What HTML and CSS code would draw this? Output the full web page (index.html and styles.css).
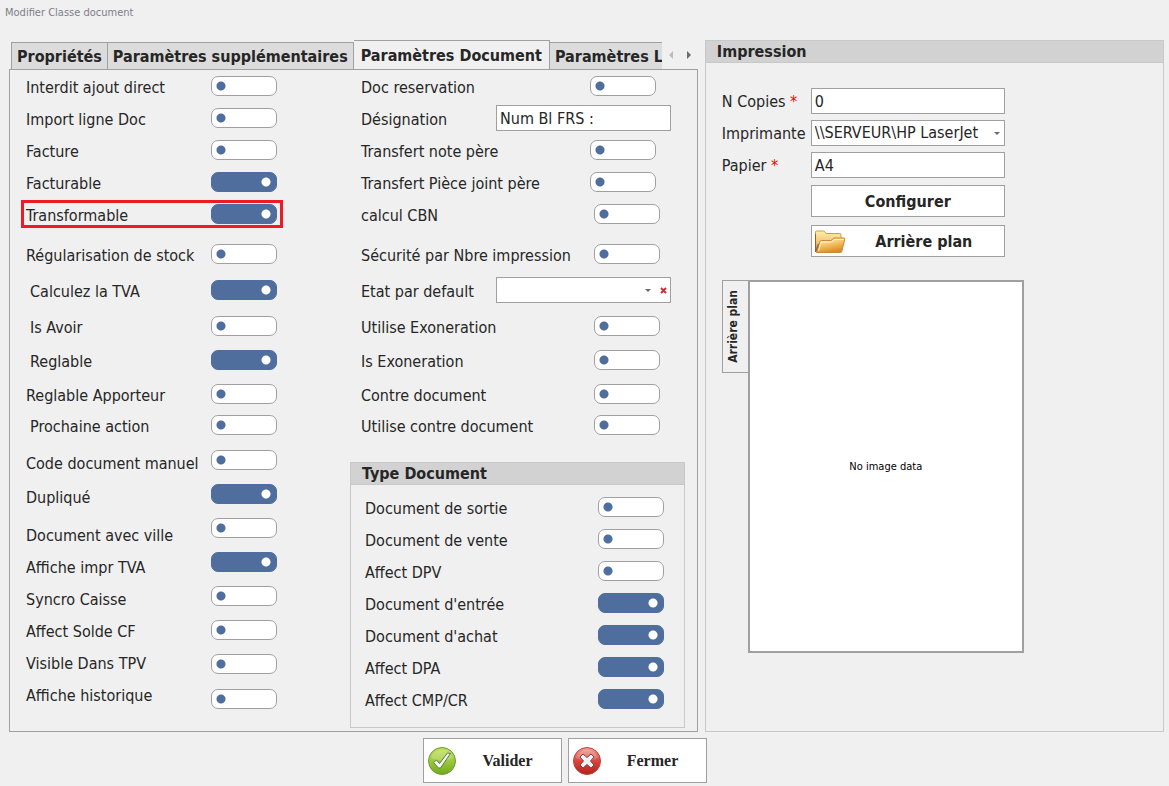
FILE: index.html
```html
<!DOCTYPE html>
<html lang="fr">
<head>
<meta charset="utf-8">
<title>Modifier Classe document</title>
<link rel="stylesheet" href="styles.css">
</head>
<body>
<h1 class="window-title">Modifier Classe document</h1>
<main class="workspace">
  <div class="editor">
    <div class="tabbar">
      <div class="tabs" role="tablist">
        <button class="tab" role="tab">Propriétés</button>
        <button class="tab" role="tab">Paramètres supplémentaires</button>
        <button class="tab tab-active" role="tab" aria-selected="true">Paramètres Document</button>
        <button class="tab tab-cut" role="tab">Paramètres L</button>
      </div>
      <button class="scroll scroll-off" aria-label="Onglet précédent"><svg width="4" height="8" viewBox="0 0 4 8"><path d="M4 0v8L0 4z"/></svg></button>
      <button class="scroll" aria-label="Onglet suivant"><svg width="4" height="8" viewBox="0 0 4 8"><path d="M0 0v8l4-4z"/></svg></button>
    </div>
    <div class="tabpanel" role="tabpanel">
      <div class="options">
        <div class="stack label-stack">
          <label for="a1">Interdit ajout direct</label>
          <label for="a2">Import ligne Doc</label>
          <label for="a3">Facture</label>
          <label for="a4">Facturable</label>
          <label for="a5">Transformable</label>
          <label for="a6">Régularisation de stock</label>
          <label for="a7" class="indent">Calculez la TVA</label>
          <label for="a8" class="indent">Is Avoir</label>
          <label for="a9" class="indent">Reglable</label>
          <label for="a10">Reglable Apporteur</label>
          <label for="a11" class="indent">Prochaine action</label>
          <label for="a12">Code document manuel</label>
          <label for="a13">Dupliqué</label>
          <label for="a14">Document avec ville</label>
          <label for="a15">Affiche impr TVA</label>
          <label for="a16">Syncro Caisse</label>
          <label for="a17">Affect Solde CF</label>
          <label for="a18">Visible Dans TPV</label>
          <label for="a19">Affiche historique</label>
        </div>
        <div class="stack switch-stack">
          <input class="switch" type="checkbox" id="a1">
          <input class="switch" type="checkbox" id="a2">
          <input class="switch" type="checkbox" id="a3">
          <input class="switch" type="checkbox" id="a4" checked>
          <input class="switch" type="checkbox" id="a5" checked>
          <input class="switch" type="checkbox" id="a6">
          <input class="switch" type="checkbox" id="a7" checked>
          <input class="switch" type="checkbox" id="a8">
          <input class="switch" type="checkbox" id="a9" checked>
          <input class="switch" type="checkbox" id="a10">
          <input class="switch" type="checkbox" id="a11">
          <input class="switch" type="checkbox" id="a12">
          <input class="switch" type="checkbox" id="a13" checked>
          <input class="switch" type="checkbox" id="a14">
          <input class="switch" type="checkbox" id="a15" checked>
          <input class="switch" type="checkbox" id="a16">
          <input class="switch" type="checkbox" id="a17">
          <input class="switch" type="checkbox" id="a18">
          <input class="switch" type="checkbox" id="a19">
        </div>
        <div class="highlight"></div>
      </div>
      <div class="details">
        <div class="fields">
          <label for="b1">Doc reservation</label><input class="switch inset" type="checkbox" id="b1">
          <label for="b2">Désignation</label><input class="box field-box" type="text" id="b2" value="Num Bl FRS :">
          <label for="b3">Transfert note père</label><input class="switch inset" type="checkbox" id="b3">
          <label for="b4">Transfert Pièce joint père</label><input class="switch inset" type="checkbox" id="b4">
          <label for="b5">calcul CBN</label><input class="switch" type="checkbox" id="b5">
          <label for="b6">Sécurité par Nbre impression</label><input class="switch" type="checkbox" id="b6">
          <label for="b7">Etat par default</label>
          <div class="combo field-box">
            <select class="box" id="b7"><option></option></select>
            <svg class="caret caret-inner" width="6" height="3" viewBox="0 0 6 3"><path d="M0 0h6L3 3z"/></svg>
            <button class="clear" aria-label="Effacer"><svg width="7" height="7" viewBox="0 0 7 7"><path d="M1 1l5 5M6 1L1 6"/></svg></button>
          </div>
          <label for="b8">Utilise Exoneration</label><input class="switch" type="checkbox" id="b8">
          <label for="b9">Is Exoneration</label><input class="switch" type="checkbox" id="b9">
          <label for="b10">Contre document</label><input class="switch" type="checkbox" id="b10">
          <label for="b11">Utilise contre document</label><input class="switch" type="checkbox" id="b11">
        </div>
        <section class="group">
          <h2 class="group-title">Type Document</h2>
          <div class="type-list">
            <label for="c1">Document de sortie</label><input class="switch" type="checkbox" id="c1">
            <label for="c2">Document de vente</label><input class="switch" type="checkbox" id="c2">
            <label for="c3">Affect DPV</label><input class="switch" type="checkbox" id="c3">
            <label for="c4">Document d'entrée</label><input class="switch" type="checkbox" id="c4" checked>
            <label for="c5">Document d'achat</label><input class="switch" type="checkbox" id="c5" checked>
            <label for="c6">Affect DPA</label><input class="switch" type="checkbox" id="c6" checked>
            <label for="c7">Affect CMP/CR</label><input class="switch" type="checkbox" id="c7" checked>
          </div>
        </section>
      </div>
    </div>
  </div>
  <section class="group print">
    <h2 class="group-title">Impression</h2>
    <div class="print-body">
      <div class="print-form">
        <label for="d1">N Copies <span class="required">*</span></label>
        <input class="box" type="text" id="d1" value="0">
        <label for="d2">Imprimante</label>
        <div class="combo">
          <select class="box" id="d2"><option>\\SERVEUR\HP LaserJet</option></select>
          <svg class="caret" width="6" height="3" viewBox="0 0 6 3"><path d="M0 0h6L3 3z"/></svg>
        </div>
        <label for="d3">Papier <span class="required">*</span></label>
        <input class="box" type="text" id="d3" value="A4">
      </div>
      <div class="print-actions">
        <button class="button">Configurer</button>
        <button class="button">
          <svg width="32" height="26" viewBox="0 0 32 26">
            <defs>
              <linearGradient id="back" x1="0" y1="0" x2="0" y2="1"><stop offset="0" stop-color="#fdf0a8"/><stop offset=".55" stop-color="#f2c476"/><stop offset="1" stop-color="#a8662a"/></linearGradient>
              <linearGradient id="front" x1="0" y1="0" x2=".4" y2="1"><stop offset="0" stop-color="#fff0c4"/><stop offset=".5" stop-color="#f5c56c"/><stop offset="1" stop-color="#dd8f22"/></linearGradient>
            </defs>
            <path d="M1.500 23V3q0-1 1-1h7q1 0 1.500 1l1 1.500h14q1 0 1 1V12L8 14z" fill="url(#back)" stroke="#d49a4c"/>
            <path d="M2.500 23.500L6 12.500q.3-1 1.500-1H17l3-2.500h10q1 0 .8 1l-3 12.500q-.2 1-1.300 1z" fill="url(#front)" stroke="#c98a35"/>
            <path d="M4.500 22L7 13h10.500l3-2.500h9" fill="none" stroke="#fff3d0"/>
            <path d="M1.500 5v18l3-8" fill="none" stroke="#96602c"/>
          </svg>
          <span class="button-text">Arrière plan</span>
        </button>
      </div>
      <div class="preview">
        <button class="side-tab"><span>Arrière plan</span></button>
        <div class="canvas">No image data</div>
      </div>
    </div>
  </section>
</main>
<footer class="footer">
  <button class="command">
    <svg width="30" height="30" viewBox="0 0 30 30">
      <defs><linearGradient id="ok" x1="0" y1="0" x2="0" y2="1"><stop offset="0" stop-color="#c2e05a"/><stop offset=".5" stop-color="#9cc93c"/><stop offset="1" stop-color="#6fa91f"/></linearGradient></defs>
      <circle cx="15" cy="15" r="13.500" fill="url(#ok)" stroke="#6d9a38"/>
      <path d="M4 12a11.500 11.500 0 0 1 22 0q-10 5-22 0z" fill="#fff" opacity=".2"/>
      <path d="M6.500 16.500l3-2.500 3 3.500L20.500 7l3 .5L13.500 22h-2z" fill="#f4f7fa" stroke="#5d7c34" stroke-linejoin="round"/>
    </svg>
    <span class="button-text">Valider</span>
  </button>
  <button class="command">
    <svg width="30" height="30" viewBox="0 0 30 30">
      <defs><linearGradient id="no" x1="0" y1="0" x2="0" y2="1"><stop offset="0" stop-color="#f2a29a"/><stop offset=".5" stop-color="#d9453c"/><stop offset="1" stop-color="#b3211b"/></linearGradient></defs>
      <circle cx="15" cy="15" r="13.500" fill="url(#no)" stroke="#b8443e"/>
      <path d="M4 12a11.500 11.500 0 0 1 22 0q-10 5-22 0z" fill="#fff" opacity=".18"/>
      <path d="M11 8l4 3.500L19 8l3 3-3.500 4 3.500 4-3 3-4-3.500-4 3.500-3-3 3.500-4L8 11z" fill="#eef2f8" stroke="#8f3a3a" stroke-linejoin="round"/>
    </svg>
    <span class="button-text">Fermer</span>
  </button>
</footer>
</body>
</html>
```
FILE: styles.css
```css
* { box-sizing: border-box; }

body {
  margin: 0;
  background: #f0f0f0;
  color: #262626;
  font: 16px/22px "DejaVu Sans Condensed", "Noto Sans", sans-serif;
}

button, input, select { font: inherit; color: inherit; margin: 0; }
button { cursor: pointer; }
label { padding-top: 1px; white-space: nowrap; }

.window-title {
  margin: 0;
  padding: 5px 5px 11px;
  font: 11px/16px "DejaVu Sans Condensed", sans-serif;
  color: #7e7e88;
}

.workspace {
  display: grid;
  grid-template-columns: 3fr 2fr;
  gap: 7px;
  padding: 8px 5px 0 9px;
}

.editor { display: flex; flex-direction: column; min-width: 0; }

/* Tabs */
.tabbar { display: flex; align-items: center; height: 30px; padding-left: 2px; margin-bottom: -1px; }
.tabs { display: flex; align-items: flex-end; height: 30px; width: 651px; overflow: hidden; }
.tab {
  flex: none;
  height: 28px;
  padding: 1px 5px 0;
  border: 1px solid #a0a0a0;
  border-left-width: 0;
  background: #dcdcdc;
  font-weight: bold;
  white-space: nowrap;
}
.tab:first-child { border-left-width: 1px; }
.tab-active {
  height: 30px;
  padding: 0 7px;
  border-bottom: 0;
  background: #f0f0f0;
}
.tab-cut { padding-right: 30px; }
.scroll { display: flex; justify-content: center; width: 18px; padding: 0; border: 0; background: none; fill: #6a6a6a; }
.scroll-off { fill: #bdbdbd; }

.tabpanel {
  flex: 1;
  display: grid;
  grid-template-columns: 324px 1fr;
  padding: 6px 12px 3px 16px;
  border: 1px solid #a0a0a0;
}

/* Option switches */
.options {
  display: grid;
  grid-template-columns: 185px 66px;
  align-content: start;
  justify-self: start;
  position: relative;
}
.stack { display: grid; align-items: start; }
.label-stack { grid-template-rows: repeat(4, 32px) 40px 36px 36px 34px 34px 31px 37px 34px 38px repeat(5, 32px) 22px; }
.switch-stack { grid-template-rows: repeat(4, 32px) 40px 36px 36px 34px 34px 31px 35px repeat(6, 34px) 35px 20px; }
.indent { padding-left: 4px; }

.highlight {
  position: absolute;
  top: 124px;
  left: -5px;
  right: -6px;
  height: 28px;
  border: 3px solid #ed1c24;
  pointer-events: none;
}

.switch {
  appearance: none;
  width: 66px;
  height: 20px;
  border: 1px solid #a0a0a0;
  border-radius: 7px;
  background: #fff radial-gradient(circle at 9px 9px, #4f6d9d 4px, transparent 5px);
}
.switch:checked {
  border-color: #4f6d9d;
  background: #4f6d9d radial-gradient(circle at 54px 9px, #fff 4px, transparent 5px);
}

.details { display: flex; flex-direction: column; gap: 25px; }
.fields {
  display: grid;
  grid-template-columns: 135px 1fr;
  grid-template-rows: repeat(4, 32px) 40px 36px 36px 34px 34px 31px 22px;
  align-items: start;
  padding: 0 14px 0 11px;
}
.fields .switch { justify-self: end; margin-right: 11px; }
.fields .inset { margin-right: 15px; }
.field-box { margin-top: -3px; }

.box {
  width: 100%;
  height: 26px;
  padding: 0 3px;
  border: 1px solid #a0a0a0;
  border-radius: 0;
  background: #fff;
  appearance: none;
}
.combo { position: relative; display: flex; }
.caret { position: absolute; right: 5px; top: 12px; fill: #6a6a6a; }
.caret-inner { right: 20px; }
.clear {
  position: absolute;
  right: 4px;
  top: 10px;
  display: flex;
  padding: 0;
  border: 0;
  background: none;
  stroke: #cf2f3c;
  stroke-width: 2;
}

/* Titled groups */
.group { border: 1px solid #c8c8c8; }
.group-title {
  margin: 0;
  padding: 0 11px;
  border-bottom: 1px solid #c8c8c8;
  background: #d2d2d2;
  font-size: 16px;
  line-height: 21px;
}
.type-list {
  display: grid;
  grid-template-columns: 1fr 66px;
  grid-template-rows: repeat(6, 32px) 22px;
  align-items: start;
  padding: 12px 20px 16px 14px;
}

/* Print settings */
.print { min-width: 0; }
.print-body { padding: 25px 16px; }
.print-form {
  display: grid;
  grid-template-columns: 89px 194px;
  row-gap: 6px;
  align-items: center;
}
.print-form label { padding-top: 2px; }
.required { color: #f00; }
.print-actions { display: grid; gap: 8px; width: 194px; margin: 7px 0 23px 89px; }
.button {
  display: flex;
  align-items: center;
  justify-content: center;
  height: 32px;
  padding: 1px 2px 0;
  border: 1px solid #a0a0a0;
  background: #fff;
  font-weight: bold;
}
.button-text { flex: 1; text-align: center; }

.preview { display: flex; align-items: flex-start; }
.side-tab {
  display: flex;
  align-items: center;
  justify-content: center;
  width: 26px;
  height: 93px;
  padding: 0 4px 0 0;
  border: 1px solid #a0a0a0;
  border-right: 0;
  background: #f0f0f0;
  font-size: 12px;
  font-weight: bold;
  line-height: 20px;
}
.side-tab span { writing-mode: vertical-rl; transform: rotate(180deg); }
.canvas {
  display: flex;
  align-items: center;
  justify-content: center;
  width: 276px;
  height: 373px;
  border: 2px solid #a0a0a0;
  background: #fff;
  color: #000;
  font-size: 11px;
}

.footer {
  display: flex;
  justify-content: center;
  gap: 6px;
  padding: 6px 39px 3px 0;
}
.command {
  display: flex;
  align-items: center;
  width: 139px;
  height: 45px;
  padding: 0 3px;
  border: 1px solid #a0a0a0;
  background: #fff;
  font: bold 16px/20px "Liberation Serif", serif;
}
```
